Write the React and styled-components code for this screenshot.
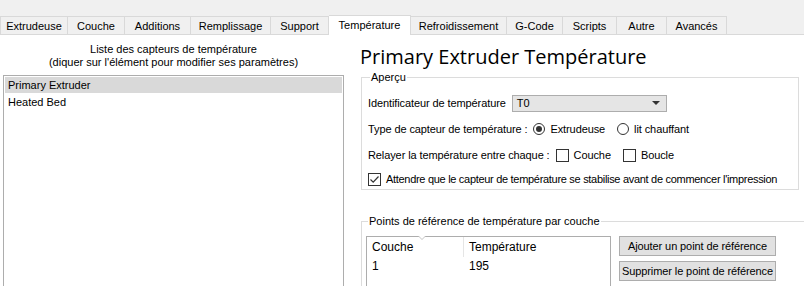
import React from 'react'
import styled, { createGlobalStyle } from 'styled-components'

const Global = createGlobalStyle`
    html, body {
        margin: 0;
        padding: 0;
        background: #ffffff;
    }
    body {
        width: 804px;
        height: 286px;
        overflow: hidden;
        font-family: 'Liberation Sans', Arial, sans-serif;
        font-size: 11px;
        color: #000;
    }
`

const Window = styled.div`
    width: 804px;
    height: 286px;
    display: flex;
    flex-direction: column;
    overflow: hidden;
`

const TabStrip = styled.div`
    height: 35px;
    flex: none;
    background: #f0f0f0;
    display: flex;
    align-items: flex-end;
    border-bottom: 1px solid #d9d9d9;
    box-sizing: border-box;
`

const Tab = styled.div`
    width: ${(p) => p.$w}px;
    height: ${(p) => (p.$active ? 20 : 18)}px;
    box-sizing: border-box;
    display: flex;
    align-items: center;
    justify-content: center;
    border: 1px solid #d9d9d9;
    border-left: ${(p) => (p.$first ? '1px solid #d9d9d9' : 'none')};
    border-bottom: none;
    background: ${(p) => (p.$active ? '#ffffff' : '#f0f0f0')};
    margin-bottom: ${(p) => (p.$active ? -1 : 0)}px;
    padding-bottom: ${(p) => (p.$active ? 2 : 0)}px;
    position: relative;
    z-index: ${(p) => (p.$active ? 1 : 0)};
`

const Body = styled.div`
    flex: 1;
    display: flex;
    background: #ffffff;
    min-height: 0;
`

const LeftPanel = styled.div`
    width: 341px;
    flex: none;
    margin-left: 3px;
    display: flex;
    flex-direction: column;
`

const ListCaption = styled.div`
    text-align: center;
    line-height: 13px;
    padding-top: 8px;
    height: 40px;
    box-sizing: border-box;
`

const ListBox = styled.div`
    flex: 1;
    border: 1px solid #adadad;
    border-bottom: none;
    padding: 1px;
`

const ListItem = styled.div`
    height: 16px;
    line-height: 16px;
    padding-left: 3px;
    background: ${(p) => (p.$selected ? '#d9d9d9' : 'transparent')};
    margin-bottom: 1px;
`

const RightPanel = styled.div`
    flex: 1;
    padding-left: 15px;
    display: flex;
    flex-direction: column;
    min-width: 0;
`

const Title = styled.div`
    font-family: 'Open Sans', 'Noto Sans', sans-serif;
    font-size: 20px;
    line-height: 28px;
    height: 38px;
    padding-top: 8px;
    box-sizing: border-box;
    margin-left: 1px;
`

const Group = styled.fieldset`
    margin: ${(p) => p.$top || 0}px 0 0 2px;
    padding: ${(p) => p.$pad};
    border: 1px solid #dcdcdc;
    border-right: ${(p) => (p.$open ? 'none' : '1px solid #dcdcdc')};
    width: ${(p) => p.$w}px;
    height: ${(p) => p.$h}px;
    box-sizing: border-box;
    min-width: 0;
`

const Legend = styled.legend`
    padding: 0 1px;
    margin-left: 2px;
    line-height: 13px;
`

const Row = styled.div`
    display: flex;
    align-items: center;
    height: ${(p) => p.$h || 26}px;
    white-space: nowrap;
`

const Label = styled.span`
    margin-right: ${(p) => p.$gap || 4}px;
    letter-spacing: -0.1px;
`

const Select = styled.div`
    width: 155px;
    height: 17px;
    box-sizing: border-box;
    border: 1px solid #adadad;
    background: #e5e5e5;
    display: flex;
    align-items: center;
    justify-content: space-between;
    padding: 0 6px 0 4px;
`

const Arrow = styled.span`
    width: 0;
    height: 0;
    border-left: 4px solid transparent;
    border-right: 4px solid transparent;
    border-top: 4px solid #333;
`

const Radio = styled.span`
    width: 12px;
    height: 12px;
    box-sizing: border-box;
    border-radius: 50%;
    border: 1px solid #333;
    display: inline-flex;
    align-items: center;
    justify-content: center;
    margin-right: 5px;
    &::after {
        content: '';
        width: 6px;
        height: 6px;
        border-radius: 50%;
        background: ${(p) => (p.$on ? '#333' : 'transparent')};
    }
`

const Check = styled.span`
    width: 13px;
    height: 13px;
    box-sizing: border-box;
    border: 1px solid #333;
    display: inline-flex;
    align-items: center;
    justify-content: center;
    margin-right: 5px;
    background: #fff;
`

const Option = styled.span`
    display: inline-flex;
    align-items: center;
    margin-right: ${(p) => p.$gap || 10}px;
    letter-spacing: ${(p) => (p.$tight ? -0.3 : -0.1)}px;
`

const PointsArea = styled.div`
    display: flex;
    align-items: flex-start;
    gap: 7px;
    padding-top: 4px;
`

const ListView = styled.div`
    width: 245px;
    height: 60px;
    box-sizing: border-box;
    border: 1px solid #adadad;
    border-bottom: none;
`

const HeaderRow = styled.div`
    display: flex;
    height: 20px;
    align-items: center;
`

const Cell = styled.div`
    width: ${(p) => p.$w}px;
    padding-left: 5px;
    box-sizing: border-box;
    height: 100%;
    display: flex;
    align-items: center;
    border-right: ${(p) => (p.$divider ? '1px solid #e5e5e5' : 'none')};
    position: relative;
    font-size: 12px;
`

const SortMark = styled.span`
    position: absolute;
    left: 51px;
    top: -1px;
    width: 0;
    height: 0;
    border-left: 4px solid transparent;
    border-right: 4px solid transparent;
    border-top: 4px solid #c4c4c4;
    &::after {
        content: '';
        position: absolute;
        left: -3px;
        top: -4px;
        border-left: 3px solid transparent;
        border-right: 3px solid transparent;
        border-top: 3px solid #fff;
    }
`

const DataRow = styled.div`
    display: flex;
    height: 18px;
    align-items: center;
`

const Buttons = styled.div`
    display: flex;
    flex-direction: column;
    gap: 5px;
    padding-top: 0;
    margin-left: 1px;
`

const Button = styled.div`
    width: 157px;
    height: 20px;
    box-sizing: border-box;
    border: 1px solid #adadad;
    background: #e1e1e1;
    display: flex;
    align-items: center;
    justify-content: center;
    white-space: nowrap;
    letter-spacing: -0.1px;
`

const tabs = [
    ['Extrudeuse', 68],
    ['Couche', 57],
    ['Additions', 66],
    ['Remplissage', 80],
    ['Support', 58],
    ['Température', 82],
    ['Refroidissement', 96],
    ['G-Code', 56],
    ['Scripts', 54],
    ['Autre', 50],
    ['Avancés', 60],
]

export default function App() {
    return (
        <Window>
            <Global />
            <TabStrip>
                {tabs.map(([name, w], i) => (
                    <Tab key={name} $w={w} $first={i === 0} $active={name === 'Température'}>
                        {name}
                    </Tab>
                ))}
            </TabStrip>
            <Body>
                <LeftPanel>
                    <ListCaption>
                        Liste des capteurs de température
                        <br />
                        (diquer sur l'élément pour modifier ses paramètres)
                    </ListCaption>
                    <ListBox>
                        <ListItem $selected>Primary Extruder</ListItem>
                        <ListItem>Heated Bed</ListItem>
                    </ListBox>
                </LeftPanel>
                <RightPanel>
                    <Title>Primary Extruder Température</Title>
                    <Group $w={438} $h={119} $pad="6px 6px 0 6px">
                        <Legend>Aperçu</Legend>
                        <Row>
                            <Label $gap={6}>Identificateur de température</Label>
                            <Select>
                                <span>T0</span>
                                <Arrow />
                            </Select>
                        </Row>
                        <Row>
                            <Label $gap={6}>Type de capteur de température :</Label>
                            <Option $gap={12}>
                                <Radio $on />
                                Extrudeuse
                            </Option>
                            <Option>
                                <Radio />
                                lit chauffant
                            </Option>
                        </Row>
                        <Row>
                            <Label $gap={6}>Relayer la température entre chaque :</Label>
                            <Option $gap={12}>
                                <Check />
                                Couche
                            </Option>
                            <Option>
                                <Check />
                                Boucle
                            </Option>
                        </Row>
                        <Row $h={22}>
                            <Option $tight>
                                <Check>
                                    <svg width="11" height="11" viewBox="0 0 11 11">
                                        <path d="M1.5 5.5 L4.2 8.2 L9.5 2.5" fill="none" stroke="#333" strokeWidth="1.2" />
                                    </svg>
                                </Check>
                                Attendre que le capteur de température se stabilise avant de commencer l'impression
                            </Option>
                        </Row>
                    </Group>
                    <Group $w={460} $h={80} $pad="4px 0 0 4px" $open $top={25}>
                        <Legend>Points de référence de température par couche</Legend>
                        <PointsArea>
                            <ListView>
                                <HeaderRow>
                                    <Cell $w={97} $divider>
                                        Couche
                                        <SortMark />
                                    </Cell>
                                    <Cell $w={140}>Température</Cell>
                                </HeaderRow>
                                <DataRow>
                                    <Cell $w={97}>1</Cell>
                                    <Cell $w={140}>195</Cell>
                                </DataRow>
                            </ListView>
                            <Buttons>
                                <Button>Ajouter un point de référence</Button>
                                <Button>Supprimer le point de référence</Button>
                            </Buttons>
                        </PointsArea>
                    </Group>
                </RightPanel>
            </Body>
        </Window>
    )
}
